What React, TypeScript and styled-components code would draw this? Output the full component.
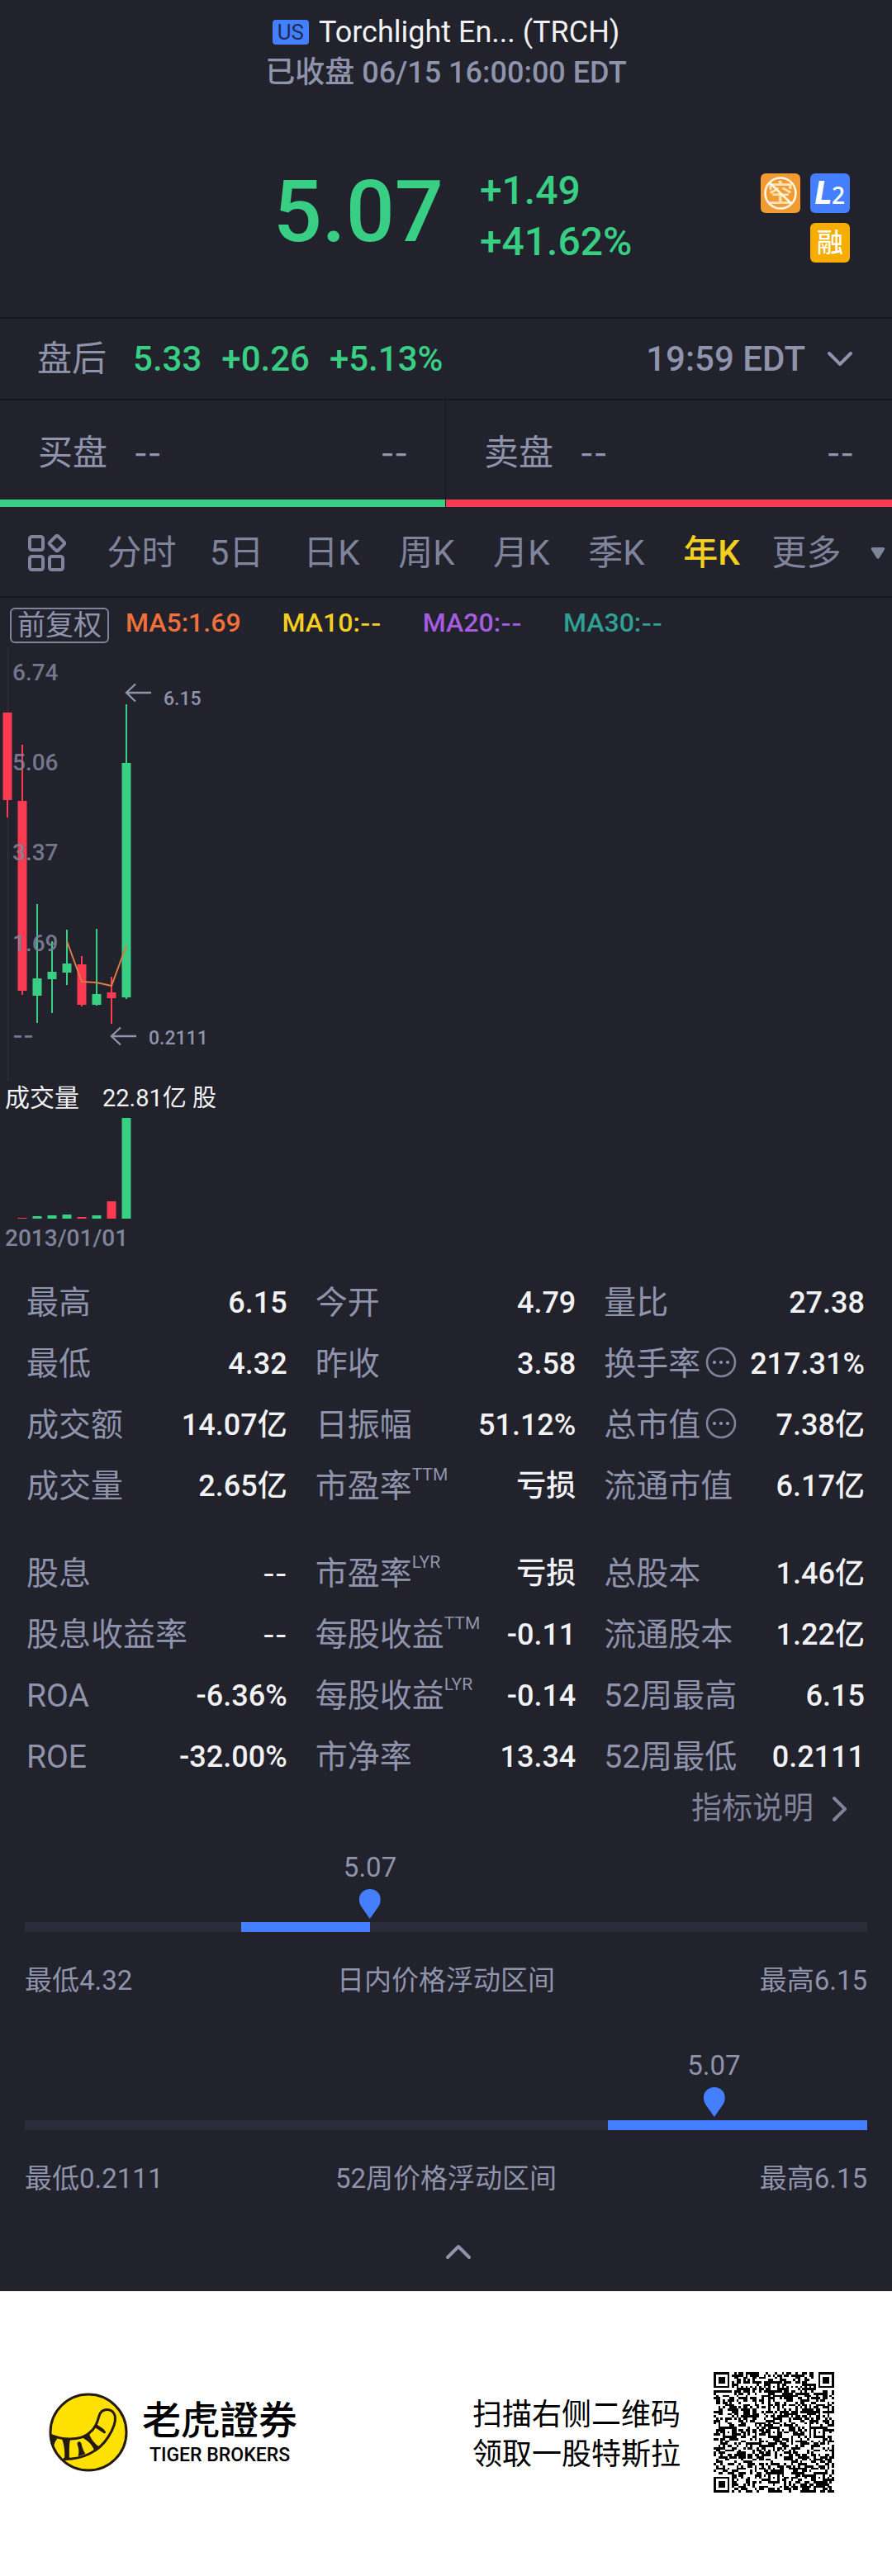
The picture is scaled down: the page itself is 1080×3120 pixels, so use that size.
import React from "react";
import styled, { createGlobalStyle, css } from "styled-components";

const color = {
  bg: "#21222b",
  line: "#16171f",
  text: "#f2f2f4",
  label: "#8f93ab",
  muted: "#7f839b",
  green: "#38ce83",
  red: "#fc3a52",
  blue: "#447fff",
  yellow: "#f5cf1f",
  track: "#2b2d3a",
  ma5: "#f2713a",
  ma20: "#a65ce0",
  ma30: "#2fa093",
};

const fontStack = `Roboto, "Noto Sans CJK SC", sans-serif`;

const GlobalStyle = createGlobalStyle`
  *, *::before, *::after { box-sizing: border-box; }
  body { margin: 0; background: #fff; font-family: ${fontStack}; }
  h1, p, dl, dt, dd { margin: 0; font-weight: inherit; }
  button { margin: 0; padding: 0; border: 0; background: none; color: inherit; font: inherit; cursor: pointer; }
  a { color: inherit; text-decoration: none; }
  svg { display: block; }
`;

const Quote = styled.main`
  background: ${color.bg};
  color: ${color.label};
`;

/* ---------- header ---------- */

const Header = styled.header`
  display: flex;
  flex-direction: column;
  align-items: center;
  gap: 5px;
  padding-top: 17px;
  font-size: 36px;
  line-height: 44px;
`;

const TitleRow = styled.div`
  display: flex;
  align-items: center;
  gap: 12px;
  color: ${color.text};
`;

const Market = styled.span`
  padding: 0 6px;
  border-radius: 4px;
  background: ${color.blue};
  color: #1c2c55;
  font-size: 26px;
  line-height: 30px;
`;

const Title = styled.h1`
  font-size: 36px;
`;

const MarketState = styled.p`
  font-weight: 500;
`;

/* ---------- price ---------- */

const PriceRow = styled.section`
  display: grid;
  grid-template-columns: 1fr auto 1fr;
  align-items: start;
  padding: 90px 51px 60px 67px;
  border-bottom: 2px solid ${color.line};
  color: ${color.green};
  font-weight: 500;
`;

const PriceGroup = styled.div`
  display: flex;
  grid-column: 2;
  gap: 44px;
`;

const Price = styled.strong`
  font-size: 104px;
  font-weight: 500;
  line-height: 114px;
`;

const Changes = styled.div`
  display: flex;
  flex-direction: column;
  font-size: 48px;
  line-height: 62px;
`;

const Badges = styled.div`
  display: flex;
  flex-wrap: wrap;
  justify-content: flex-end;
  justify-self: end;
  gap: 12px;
  width: 108px;
  padding-top: 10px;
`;

const Badge = styled.span<{ $bg: string }>`
  display: flex;
  align-items: baseline;
  justify-content: center;
  width: 48px;
  height: 48px;
  border-radius: 6px;
  background: ${(p) => p.$bg};
  color: #fff;
  font-size: 32px;
  line-height: 48px;
`;

const LevelLetter = styled.b`
  font-size: 38px;
  font-style: italic;
  font-weight: 900;
`;

const LevelNumber = styled.b`
  font-family: "Open Sans", sans-serif;
  font-size: 28px;
  font-weight: 600;
`;

/* ---------- after hours, bid and ask ---------- */

const AfterHours = styled.section`
  display: flex;
  align-items: center;
  justify-content: space-between;
  padding: 0 47px 0 45px;
  border-bottom: 2px solid ${color.line};
  font-size: 42px;
  line-height: 97px;
`;

const AfterQuote = styled.div`
  display: flex;
  gap: 24px;
`;

const AfterLabel = styled.span`
  margin-right: 8px;
`;

const AfterValue = styled.span`
  color: ${color.green};
  font-weight: 500;
`;

const ExpandButton = styled.button`
  display: flex;
  align-items: center;
  gap: 26px;
  font-weight: 500;
  line-height: inherit;
`;

const Book = styled.section`
  display: grid;
  grid-template-columns: 1fr 1fr;
`;

const BookSide = styled.div<{ $bar: string }>`
  display: flex;
  gap: 32px;
  padding: 8px 46px 0;
  border-bottom: 9px solid ${(p) => p.$bar};
  font-size: 42px;
  line-height: 112px;

  & + & {
    box-shadow: -1px 0 0 ${color.line};
  }
`;

const Dash = styled.span<{ $end?: boolean }>`
  font-family: Inter, sans-serif;
  font-size: 36px;
  font-weight: 500;
  ${(p) => p.$end && css`margin-left: auto;`}
`;

/* ---------- period tabs ---------- */

const Periods = styled.nav`
  display: flex;
  padding-top: 4px;
  border-bottom: 2px solid ${color.line};
  color: ${color.muted};
  font-size: 42px;
  line-height: 104px;
`;

const LayoutButton = styled.button`
  display: flex;
  align-items: center;
  width: 114px;
  padding-left: 32px;
`;

const TabList = styled.div`
  display: grid;
  grid-template-columns: repeat(8, 1fr);
  flex: 1;
`;

const Tab = styled.button<{ $active?: boolean }>`
  line-height: inherit;
  ${(p) => p.$active && css`color: ${color.yellow}; font-weight: 500;`}
`;

const MoreButton = styled.button`
  display: flex;
  align-items: center;
  justify-content: center;
  width: 46px;
  padding-left: 12px;
`;

/* ---------- chart ---------- */

const Legend = styled.div`
  display: flex;
  align-items: flex-start;
  padding: 12px 12px 0;
  font-size: 32px;
  line-height: 36px;
`;

const AdjustButton = styled.button`
  margin-right: 20px;
  padding: 0 7px;
  border: 2px solid ${color.muted};
  border-radius: 6px;
  font-size: 34px;
  line-height: 39px;
`;

const Average = styled.span<{ $color: string }>`
  margin-right: 50px;
  color: ${(p) => p.$color};
  font-weight: 500;
`;

const AverageDash = styled.span`
  font-family: Inter, sans-serif;
  font-size: 28px;
`;

const Plot = styled.svg`
  width: 100%;
  font-family: ${fontStack};
`;

const AxisText = styled.text`
  fill: ${color.muted};
  fill-opacity: 0.9;
  font-size: 28px;
  font-weight: 500;
`;

const NoteText = styled.text`
  fill: ${color.label};
  font-size: 23px;
  font-weight: 500;
`;

const VolumeTitle = styled.p`
  display: flex;
  gap: 28px;
  padding-left: 6px;
  color: ${color.text};
  font-size: 30px;
  line-height: 42px;
`;

const VolumeValue = styled.span`
  font-size: 29px;
`;

const ChartDate = styled.p`
  padding-left: 6px;
  color: ${color.muted};
  font-size: 28px;
  font-weight: 500;
  line-height: 46px;
`;

/* ---------- statistics ---------- */

const Stats = styled.section`
  display: flex;
  flex-direction: column;
  gap: 32px;
  padding: 18px 33px 0 32px;
`;

const StatGroup = styled.dl`
  display: grid;
  grid-template-columns: repeat(3, 1fr);
  column-gap: 34px;
`;

const Stat = styled.div`
  display: flex;
  justify-content: space-between;
  line-height: 74px;
  white-space: nowrap;
`;

const StatLabel = styled.dt`
  display: flex;
  font-size: 39px;
`;

const StatNote = styled.sup`
  font-size: 21px;
  line-height: 46px;
  vertical-align: baseline;
`;

const InfoButton = styled.button`
  align-self: center;
  margin-left: 6px;
  padding-bottom: 4px;
`;

const StatValue = styled.dd`
  color: ${color.text};
  font-size: 36px;
  font-weight: 500;
`;

const StatDash = styled(StatValue)`
  font-family: Inter, sans-serif;
  font-size: 32px;
`;

const GuideLink = styled.a`
  display: flex;
  align-items: center;
  justify-content: flex-end;
  gap: 22px;
  padding-right: 53px;
  color: ${color.muted};
  font-size: 37px;
  line-height: 52px;
`;

/* ---------- price ranges ---------- */

const Ranges = styled.section`
  display: flex;
  flex-direction: column;
  gap: 57px;
  padding: 23px 30px 0;
  font-size: 33px;
`;

const RangeScale = styled.div`
  position: relative;
  padding-top: 88px;
`;

const Track = styled.div`
  position: relative;
  height: 12px;
  background: ${color.track};
`;

const TrackFill = styled.div`
  position: absolute;
  height: 100%;
  background: ${color.blue};
`;

const Marker = styled.div`
  position: absolute;
  top: 0;
  display: flex;
  flex-direction: column;
  align-items: center;
  gap: 4px;
  line-height: 44px;
  transform: translateX(-50%);
`;

const RangeLabels = styled.div`
  display: grid;
  grid-template-columns: 1fr auto 1fr;
  margin-top: 35px;
  line-height: 48px;

  & > :last-child {
    text-align: right;
  }
`;

const CollapseButton = styled.button`
  display: flex;
  justify-content: center;
  width: 100%;
  padding: 54px 0 38px 30px;
`;

/* ---------- footer ---------- */

const Footer = styled.footer`
  display: flex;
  align-items: center;
  gap: 40px;
  padding: 98px 70px 101px 59px;
  background: #fff;
  color: #000;
`;

const Brand = styled.div`
  display: flex;
  align-items: center;
  gap: 17px;
  margin-right: auto;
`;

const BrandText = styled.div`
  display: flex;
  flex-direction: column;
  align-items: center;
`;

const BrandName = styled.span`
  font-family: Roboto, "Noto Sans CJK TC", sans-serif;
  font-size: 47px;
  font-weight: 500;
  line-height: 56px;
`;

const BrandLatin = styled.span`
  font-size: 23px;
  font-weight: 500;
  line-height: 28px;
`;

const ScanText = styled.p`
  padding-top: 6px;
  font-size: 36px;
  line-height: 48px;
`;

/* ---------- data ---------- */

type Candle = {
  up: boolean;
  high: number;
  low: number;
  top: number;
  bottom: number;
  volume: number;
};

const candles: Candle[] = [
  { up: false, high: 84, low: 211, top: 84, bottom: 190, volume: 0 },
  { up: false, high: 123, low: 426, top: 191, bottom: 421, volume: 1 },
  { up: true, high: 316, low: 460, top: 406, bottom: 427, volume: 3 },
  { up: true, high: 361, low: 448, top: 398, bottom: 407, volume: 4 },
  { up: true, high: 347, low: 414, top: 388, bottom: 399, volume: 5 },
  { up: false, high: 379, low: 440, top: 389, bottom: 438, volume: 2 },
  { up: true, high: 346, low: 439, top: 425, bottom: 438, volume: 4 },
  { up: false, high: 404, low: 461, top: 423, bottom: 430, volume: 21 },
  { up: true, high: 74, low: 431, top: 145, bottom: 429, volume: 122 },
];

const candleX = (i: number) => 9 + i * 18;
const candleColor = (c: Candle) => (c.up ? color.green : color.red);

const axis = [
  { label: "6.74", y: 45 },
  { label: "5.06", y: 154 },
  { label: "3.37", y: 263 },
  { label: "1.69", y: 373 },
];

const periods = ["分时", "5日", "日K", "周K", "月K", "季K", "年K", "更多"];

type StatItem = { label: string; value: string; note?: string; info?: boolean };

const statGroups: StatItem[][] = [
  [
    { label: "最高", value: "6.15" },
    { label: "今开", value: "4.79" },
    { label: "量比", value: "27.38" },
    { label: "最低", value: "4.32" },
    { label: "昨收", value: "3.58" },
    { label: "换手率", value: "217.31%", info: true },
    { label: "成交额", value: "14.07亿" },
    { label: "日振幅", value: "51.12%" },
    { label: "总市值", value: "7.38亿", info: true },
    { label: "成交量", value: "2.65亿" },
    { label: "市盈率", note: "TTM", value: "亏损" },
    { label: "流通市值", value: "6.17亿" },
  ],
  [
    { label: "股息", value: "--" },
    { label: "市盈率", note: "LYR", value: "亏损" },
    { label: "总股本", value: "1.46亿" },
    { label: "股息收益率", value: "--" },
    { label: "每股收益", note: "TTM", value: "-0.11" },
    { label: "流通股本", value: "1.22亿" },
    { label: "ROA", value: "-6.36%" },
    { label: "每股收益", note: "LYR", value: "-0.14" },
    { label: "52周最高", value: "6.15" },
    { label: "ROE", value: "-32.00%" },
    { label: "市净率", value: "13.34" },
    { label: "52周最低", value: "0.2111" },
  ],
];

/* ---------- drawings ---------- */

function Chevron({ d, w, h }: { d: string; w: number; h: number }) {
  return (
    <svg width={w} height={h} viewBox={`0 0 ${w} ${h}`} fill="none" stroke="currentColor" strokeWidth="4" strokeLinecap="round" strokeLinejoin="round" aria-hidden="true">
      <path d={d} />
    </svg>
  );
}

function NoShortIcon() {
  return (
    <svg width="48" height="48" viewBox="0 0 48 48" role="img" aria-label="不可卖空">
      <text x="24" y="35" textAnchor="middle" fontSize="31" fontWeight="500" fill="#ffe2b8">空</text>
      <g fill="none" stroke="#fff6e4" strokeWidth="2.6">
        <circle cx="24" cy="24" r="18.5" />
        <path d="M10.5 11 37.5 37" />
      </g>
    </svg>
  );
}

function GridIcon() {
  return (
    <svg width="48" height="46" viewBox="0 0 48 46" fill="none" stroke="currentColor" strokeWidth="4" aria-hidden="true">
      <rect x="4" y="3" width="16" height="16" rx="2.5" />
      <rect x="4" y="27" width="16" height="16" rx="2.5" />
      <rect x="28" y="27" width="16" height="16" rx="2.5" />
      <rect x="-7" y="-7" width="14" height="14" rx="2" transform="translate(37 11) rotate(45)" />
    </svg>
  );
}

function DotsIcon() {
  return (
    <svg width="38" height="38" viewBox="0 0 38 38" aria-hidden="true">
      <circle cx="19" cy="19" r="17" fill="none" stroke={color.muted} strokeWidth="2.6" />
      <g fill={color.label}>
        <circle cx="11" cy="19" r="2.1" />
        <circle cx="19" cy="19" r="2.1" />
        <circle cx="27" cy="19" r="2.1" />
      </g>
    </svg>
  );
}

function Pin() {
  return (
    <svg width="26" height="36" viewBox="0 0 26 36" fill={color.blue} aria-hidden="true">
      <path d="M13 0C5.5 0 0 5.600 0 12.800c0 3.200 1 5.600 2.300 8L13 36l10.700-15.200c1.300-2.400 2.300-4.800 2.300-8C26 5.600 20.500 0 13 0Z" />
    </svg>
  );
}

function TigerLogo() {
  return (
    <svg width="96" height="96" viewBox="30 26 286 288" role="img" aria-label="Tiger Brokers">
      <circle cx="173" cy="170" r="138" fill="#ffe100" stroke="#241a10" strokeWidth="9" />
      <path d="M38 181C80 198 140 200 172 176C202 154 206 130 212 110C222 80 262 80 270 112C273 130 262 160 245 187C212 240 150 270 82 267" fill="none" stroke="#241a10" strokeWidth="9" />
      <g fill="#241a10">
        <path d="M34 174 60 194C53 200 49 212 46 226L36 206Z" />
        <path d="M77 194H108C104 206 103 226 104 266L86 268C89 240 84 212 77 194Z" />
        <path d="M133 214C130 204 142 200 147 209C150 224 155 238 162 248L136 258C140 240 138 228 133 214Z" />
        <path d="M148 188 176 170C176 186 194 210 212 222L194 236C188 216 172 200 148 188Z" />
        <path d="M191 150 200 138C208 148 222 150 233 164C240 172 234 176 227 172C214 164 208 158 191 150Z" />
      </g>
    </svg>
  );
}

const QR_SIZE = 53;

function qrPath() {
  const finders = [[0, 0], [QR_SIZE - 7, 0], [0, QR_SIZE - 7]];
  const aligns = [[26, 6], [6, 26], [26, 26], [46, 26], [26, 46], [46, 46]];
  let seed = 20210615;
  let d = "";
  for (let y = 0; y < QR_SIZE; y++) {
    for (let x = 0; x < QR_SIZE; x++) {
      seed = (Math.imul(seed, 1664525) + 1013904223) >>> 0;
      let on = seed >>> 31 === 1;
      if (x === 6 || y === 6) on = (x + y) % 2 === 0;
      for (const [ax, ay] of aligns) {
        const r = Math.max(Math.abs(x - ax), Math.abs(y - ay));
        if (r <= 2) on = r !== 1;
      }
      for (const [fx, fy] of finders) {
        const r = Math.max(Math.abs(x - fx - 3), Math.abs(y - fy - 3));
        if (r <= 4) on = r <= 1 || r === 3;
      }
      if (on) d += `M${x} ${y}h1v1h-1z`;
    }
  }
  return d;
}

function QrCode() {
  return (
    <svg width="146" height="146" viewBox={`0 0 ${QR_SIZE} ${QR_SIZE}`} shapeRendering="crispEdges" role="img" aria-label="二维码">
      <path d={qrPath()} />
    </svg>
  );
}

/* ---------- parts ---------- */

function PriceChart() {
  return (
    <Plot height="530" role="img" aria-label="年K线">
      <path d="M9.500 6V530" stroke="#30313b" />
      {candles.map((c, i) => (
        <g key={i} fill={candleColor(c)}>
          <rect x={candleX(i) - 1} y={c.high} width="2" height={c.low - c.high} />
          <rect x={candleX(i) - 5.5} y={c.top} width="11" height={c.bottom - c.top} />
        </g>
      ))}
      <path d="M81 361 99 410 117 411 135 415 153 366" fill="none" stroke="#dd7a45" strokeWidth="2" />
      {axis.map((a) => (
        <AxisText key={a.label} x="15" y={a.y}>{a.label}</AxisText>
      ))}
      <AxisText x="15" y="485" fontFamily="Inter, sans-serif">--</AxisText>
      <g fill="none" stroke={color.label} strokeWidth="2.400">
        <path d="M183 60H153M164 49.500 153 60 164 70.500" />
        <path d="M165 476H135M146 465.500 135 476 146 486.500" />
      </g>
      <NoteText x="198" y="75">6.15</NoteText>
      <NoteText x="180" y="486">0.2111</NoteText>
    </Plot>
  );
}

function VolumeChart() {
  return (
    <Plot height="126" role="img" aria-label="成交量">
      {candles.map((c, i) => (
        <rect key={i} x={candleX(i) - 5.5} y={125 - c.volume} width="11" height={c.volume} fill={candleColor(c)} />
      ))}
    </Plot>
  );
}

function StatCell({ label, note, info, value }: StatItem) {
  return (
    <Stat>
      <StatLabel>
        {label}
        {note && <StatNote>{note}</StatNote>}
        {info && (
          <InfoButton type="button" aria-label={`${label}说明`}>
            <DotsIcon />
          </InfoButton>
        )}
      </StatLabel>
      {value === "--" ? <StatDash>{value}</StatDash> : <StatValue>{value}</StatValue>}
    </Stat>
  );
}

type RangeProps = { name: string; low: string; high: string; from: number; to: number };

const LAST_PRICE = 5.07;

function PriceRange({ name, low, high, from, to }: RangeProps) {
  const lo = Number(low);
  const at = (v: number) => ((v - lo) / (Number(high) - lo)) * 100;
  return (
    <div>
      <RangeScale>
        <Marker style={{ left: `${at(LAST_PRICE)}%` }}>
          {LAST_PRICE}
          <Pin />
        </Marker>
        <Track>
          <TrackFill style={{ left: `${at(from)}%`, width: `${at(to) - at(from)}%` }} />
        </Track>
      </RangeScale>
      <RangeLabels>
        <span>最低{low}</span>
        <span>{name}</span>
        <span>最高{high}</span>
      </RangeLabels>
    </div>
  );
}

export default function App() {
  return (
    <>
      <GlobalStyle />
      <Quote>
        <Header>
          <TitleRow>
            <Market>US</Market>
            <Title>Torchlight En... (TRCH)</Title>
          </TitleRow>
          <MarketState>已收盘 06/15 16:00:00 EDT</MarketState>
        </Header>

        <PriceRow>
          <PriceGroup>
            <Price>5.07</Price>
            <Changes>
              <span>+1.49</span>
              <span>+41.62%</span>
            </Changes>
          </PriceGroup>
          <Badges>
            <Badge $bg="#f29b33"><NoShortIcon /></Badge>
            <Badge $bg={color.blue}>
              <LevelLetter>L</LevelLetter>
              <LevelNumber>2</LevelNumber>
            </Badge>
            <Badge $bg="#f7ad00">融</Badge>
          </Badges>
        </PriceRow>

        <AfterHours>
          <AfterQuote>
            <AfterLabel>盘后</AfterLabel>
            <AfterValue>5.33</AfterValue>
            <AfterValue>+0.26</AfterValue>
            <AfterValue>+5.13%</AfterValue>
          </AfterQuote>
          <ExpandButton type="button">
            19:59 EDT
            <Chevron w={32} h={20} d="M3 3 16 16 29 3" />
          </ExpandButton>
        </AfterHours>

        <Book>
          <BookSide $bar={color.green}>
            <span>买盘</span>
            <Dash>--</Dash>
            <Dash $end>--</Dash>
          </BookSide>
          <BookSide $bar={color.red}>
            <span>卖盘</span>
            <Dash>--</Dash>
            <Dash $end>--</Dash>
          </BookSide>
        </Book>

        <Periods>
          <LayoutButton type="button" aria-label="图表布局"><GridIcon /></LayoutButton>
          <TabList>
            {periods.map((p) => (
              <Tab key={p} type="button" $active={p === "年K"}>{p}</Tab>
            ))}
          </TabList>
          <MoreButton type="button" aria-label="更多周期">
            <svg width="18" height="14" viewBox="0 0 18 14" fill="currentColor" aria-hidden="true">
              <path d="M2.500 0h13c1.600 0 2.200 1.500 1.400 2.700l-6.200 10c-.8 1.300-2.600 1.300-3.400 0l-6.200-10C.3 1.500.9 0 2.500 0Z" />
            </svg>
          </MoreButton>
        </Periods>

        <Legend>
          <AdjustButton type="button">前复权</AdjustButton>
          <Average $color={color.ma5}>MA5:1.69</Average>
          <Average $color={color.yellow}>MA10:<AverageDash>--</AverageDash></Average>
          <Average $color={color.ma20}>MA20:<AverageDash>--</AverageDash></Average>
          <Average $color={color.ma30}>MA30:<AverageDash>--</AverageDash></Average>
        </Legend>
        <PriceChart />
        <VolumeTitle>
          <span>成交量</span>
          <VolumeValue>22.81亿 股</VolumeValue>
        </VolumeTitle>
        <VolumeChart />
        <ChartDate>2013/01/01</ChartDate>

        <Stats>
          {statGroups.map((group, i) => (
            <StatGroup key={i}>
              {group.map((s) => (
                <StatCell key={s.label + (s.note ?? "")} {...s} />
              ))}
            </StatGroup>
          ))}
        </Stats>
        <GuideLink href="#guide">
          指标说明
          <Chevron w={20} h={32} d="M3 3 16 16 3 29" />
        </GuideLink>

        <Ranges>
          <PriceRange name="日内价格浮动区间" low="4.32" high="6.15" from={4.79} to={5.07} />
          <PriceRange name="52周价格浮动区间" low="0.2111" high="6.15" from={4.32} to={6.15} />
        </Ranges>
        <CollapseButton type="button" aria-label="收起">
          <Chevron w={32} h={20} d="M3 17 16 4 29 17" />
        </CollapseButton>
      </Quote>

      <Footer>
        <Brand>
          <TigerLogo />
          <BrandText>
            <BrandName lang="zh-Hant">老虎證券</BrandName>
            <BrandLatin>TIGER BROKERS</BrandLatin>
          </BrandText>
        </Brand>
        <ScanText>
          扫描右侧二维码
          <br />
          领取一股特斯拉
        </ScanText>
        <QrCode />
      </Footer>
    </>
  );
}
